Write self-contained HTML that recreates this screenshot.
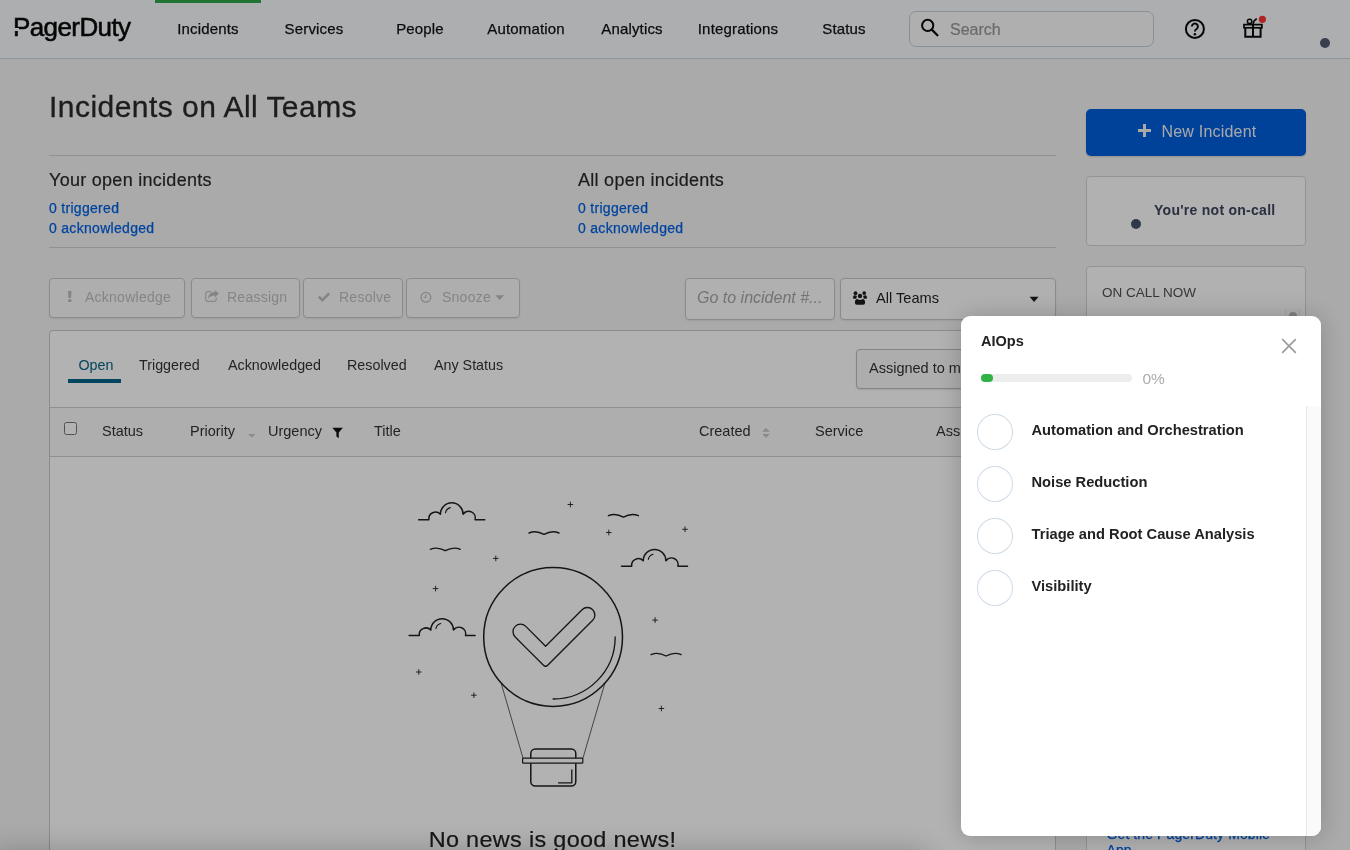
<!DOCTYPE html>
<html>
<head>
<meta charset="utf-8">
<title>Incidents - PagerDuty</title>
<style>
*{box-sizing:border-box;margin:0;padding:0}
html,body{width:1350px;height:850px;overflow:hidden;background:#f4f4f4;font-family:"Liberation Sans",sans-serif;color:#222}
.abs{position:absolute}
#page{position:absolute;left:0;top:0;width:1350px;height:850px;overflow:hidden;will-change:transform}
/* NAV */
#nav{position:absolute;left:0;top:0;width:1350px;height:59px;background:#f7f9fc;border-bottom:1px solid #cfd8e0}
#greenbar{position:absolute;left:155px;top:0;width:106px;height:3px;background:#2fa84a}
.navitem{position:absolute;top:19px;-webkit-text-stroke:0.25px #111;width:106px;text-align:center;font-size:15px;line-height:20px;letter-spacing:0.17px;color:#111}
#search{position:absolute;left:909px;top:11px;width:245px;height:36px;border:1px solid #c5ced8;border-radius:7px;background:#fbfbfb}
#search span{position:absolute;left:40px;top:8px;font-size:16px;line-height:20px;color:#999;-webkit-text-stroke:0.2px #999}
/* main */
h1{position:absolute;left:49px;top:88px;font-size:30px;line-height:38px;font-weight:400;letter-spacing:0.46px;color:#2a2a2a;-webkit-text-stroke:0.3px #2a2a2a;white-space:nowrap}
.hr{position:absolute;left:49px;width:1007px;height:1px;background:#d0d0d0}
.h3{position:absolute;font-size:18px;line-height:24px;letter-spacing:0.28px;color:#2a2a2a;-webkit-text-stroke:0.2px #2a2a2a;white-space:nowrap}
.lnk{position:absolute;font-size:14px;line-height:20px;letter-spacing:0.3px;color:#0061e4;-webkit-text-stroke:0.25px #0061e4;white-space:nowrap}
.btn{position:absolute;top:278px;height:40px;border:1px solid #c8c8c8;border-radius:4px;background:#fafafa;color:#bebebe;font-size:14px;line-height:38px;letter-spacing:0.25px;white-space:nowrap;box-shadow:0 1px 2px rgba(0,0,0,0.07)}
.btn span{position:absolute;top:-1px}

.btn i{position:absolute}
.inp{position:absolute;top:278px;height:42px;border:1px solid #c8c8c8;border-radius:4px;background:#fcfcfc;font-size:16px;line-height:38px;white-space:nowrap;box-shadow:0 1px 2px rgba(0,0,0,0.08)}
#panel{position:absolute;left:49px;top:330px;width:1007px;height:540px;background:#fff;border:1px solid #c9c9c9;border-radius:4px 4px 0 0}
.tab{position:absolute;top:24px;font-size:14.3px;line-height:20px;color:#333;white-space:nowrap}
#thead{position:absolute;left:0;top:76px;width:1005px;height:50px;background:#f9f9f9;border-top:1px solid #cfcfcf;border-bottom:1px solid #cfcfcf}
.th{position:absolute;top:13px;font-size:14.5px;line-height:20px;color:#333;white-space:nowrap}
.card{position:absolute;left:1086px;width:220px;border:1px solid #d5d5d5;border-radius:4px;background:#fefefe}
.item{position:absolute;left:70.5px;font-size:14.7px;line-height:20px;font-weight:700;color:#222;white-space:nowrap}
.circ{position:absolute;left:16.2px;width:35.8px;height:35.6px;margin-top:1.1px;border:1.4px solid #cedae6;border-radius:50%;background:#fff}
#overlay{position:absolute;left:0;top:0;width:1350px;height:850px;background:rgba(0,0,0,0.3)}
/* popup */
#popup{position:absolute;left:961px;top:316px;width:360px;height:520px;background:#fff;border-radius:9px;overflow:hidden;box-shadow:0 1px 26px rgba(0,0,0,0.215)}
</style>
</head>
<body>
<div id="page">
  <div id="nav">
    <div id="greenbar"></div>
    <div class="navitem" style="left:155px">Incidents</div>
    <div class="navitem" style="left:261px">Services</div>
    <div class="navitem" style="left:367px">People</div>
    <div class="navitem" style="left:473px">Automation</div>
    <div class="navitem" style="left:579px">Analytics</div>
    <div class="navitem" style="left:685px">Integrations</div>
    <div class="navitem" style="left:791px">Status</div>
    <div id="search"><span>Search</span></div>

    <div class="abs" id="logo" style="left:13px;top:11px;font-size:26px;line-height:32px;letter-spacing:-0.6px;color:#0a0a0a;-webkit-text-stroke:0.55px #0a0a0a;white-space:nowrap">PagerDuty</div>
    <div class="abs" style="left:13px;top:28.4px;width:6px;height:3px;background:#f7f9fc"></div>
    <svg class="abs" style="left:915px;top:14px" width="28" height="28" viewBox="915 14 28 28" fill="none" stroke="#0a0a0a"><circle cx="927.7" cy="25.4" r="5.6" stroke-width="2"/><path d="M931.8,29.6 L937.4,35.2" stroke-width="2.3" stroke-linecap="round"/></svg>
    <svg class="abs" style="left:1180px;top:14px" width="30" height="30" viewBox="1180 14 30 30" fill="none" stroke="#0a0a0a"><circle cx="1194.9" cy="28.9" r="9" stroke-width="2"/><path d="M1191.9,26.6 A3,3 0 1 1 1196.6,29 Q1194.9,30 1194.9,31.6" stroke-width="2"/><circle cx="1194.9" cy="34.2" r="1.3" fill="#0a0a0a" stroke="none"/></svg>
    <svg class="abs" style="left:1240px;top:14px" width="30" height="28" viewBox="1240 14 30 28" fill="none" stroke="#0a0a0a" stroke-width="2"><path d="M1245.3,28 V36.8 H1260.6 V28"/><rect x="1244" y="24.6" width="17.9" height="3.2" stroke-width="1.7"/><path d="M1253,24 V37"/><circle cx="1249.6" cy="21.4" r="2.2" stroke-width="1.5"/><path d="M1253,24.3 Q1253.6,20.2 1256.8,18.8" stroke-width="1.5"/><circle cx="1262.4" cy="19.3" r="3.6" fill="#fb3535" stroke="none"/></svg>
    <div class="abs" style="left:1320px;top:38px;width:10px;height:10px;border-radius:50%;background:#535b72"></div>
  </div>
  <h1>Incidents on All Teams</h1>
  <div class="hr" style="top:155px"></div>
  <div class="h3" style="left:49px;top:168px">Your open incidents</div>
  <div class="lnk" style="left:49px;top:198px">0 triggered</div>
  <div class="lnk" style="left:49px;top:218px">0 acknowledged</div>
  <div class="h3" style="left:578px;top:168px">All open incidents</div>
  <div class="lnk" style="left:578px;top:198px">0 triggered</div>
  <div class="lnk" style="left:578px;top:218px">0 acknowledged</div>
  <div class="hr" style="top:247px"></div>

  <!-- action buttons -->
  <div class="btn" style="left:49px;width:136px"><span style="left:35px">Acknowledge</span></div>
  <div class="btn" style="left:191px;width:109px"><span style="left:35px">Reassign</span></div>
  <div class="btn" style="left:303px;width:100px"><span style="left:35px">Resolve</span></div>
  <div class="btn" style="left:406px;width:114px"><span style="left:35px">Snooze</span></div>
  <div class="inp" style="left:685px;width:150px"><span style="position:absolute;left:11px;font-style:italic;color:#a6a6a6">Go to incident #...</span></div>
  <div class="inp" style="left:840px;width:216px"><span style="position:absolute;left:35px;font-size:14.6px;color:#222">All Teams</span></div>

  <!-- button icons -->
  <svg class="abs" style="left:60px;top:286px" width="460" height="24" viewBox="60 286 460 24">
    <g fill="#bdbdbd">
      <path d="M68,291 h3.5 l-0.5,7 h-2.5 z"/><rect x="68.1" y="299.3" width="3.3" height="2.6" rx="0.4"/>
      <path d="M318,297.6 l1.8,-1.8 l2.6,2.6 l5.8,-6 l1.8,1.8 l-7.6,7.7 z"/>
      <path d="M495.4,295.2 h8.6 l-4.3,4.8 z"/>
      <path d="M218.8,293.5 l-4,-3.5 v2.1 q-6.6,0 -6.6,6.8 q1.6,-3.6 6.6,-3.5 v2.1 z"/>
    </g>
    <g fill="none" stroke="#c6c6c6" stroke-width="1.3">
      <path d="M211.6,291.7 h-3.6 a2.3,2.3 0 0 0 -2.3,2.3 v5.1 a2.3,2.3 0 0 0 2.3,2.3 h6 a2.3,2.3 0 0 0 2.3,-2.3 v-1.6"/>
      <circle cx="425.9" cy="297.3" r="4.9" stroke="#bdbdbd" stroke-width="1.2"/>
      <path d="M425.9,294.3 v3.2 h-2.3" stroke="#bdbdbd" stroke-width="1.1"/>
    </g>
  </svg>
  <!-- team icon + caret -->
  <svg class="abs" style="left:850px;top:288px" width="192" height="20" viewBox="850 288 192 20" fill="#1c1c1c">
    <circle cx="855.5" cy="293.2" r="1.9"/><circle cx="864.2" cy="293.1" r="1.9"/><circle cx="860" cy="296" r="2.2"/>
    <path d="M853,297.5 q0,-2.3 1.8,-2.3 q1.6,0 2.2,1 q-0.9,1.2 -0.6,2.6 h-2.2 q-1.2,0 -1.2,-1.3 z"/>
    <path d="M867,297.5 q0,-2.3 -1.8,-2.3 q-1.6,0 -2.2,1 q0.9,1.2 0.6,2.6 h2.2 q1.2,0 1.2,-1.3 z"/>
    <path d="M854.9,302.7 q0,-3.6 2.6,-3.6 q1.2,0.9 2.5,0.9 q1.3,0 2.5,-0.9 q2.6,0 2.6,3.6 q0,2 -2,2 h-6.2 q-2,0 -2,-2 z"/>
    <path d="M1029.6,296.7 h9 l-4.5,5.2 z"/>
  </svg>
  <!-- table panel -->
  <div id="panel">
    <div class="tab" style="left:28.5px;color:#076488">Open</div>
    <div class="abs" style="left:18px;top:48px;width:53px;height:4px;background:#076488"></div>
    <div class="tab" style="left:89px">Triggered</div>
    <div class="tab" style="left:178px">Acknowledged</div>
    <div class="tab" style="left:297px">Resolved</div>
    <div class="tab" style="left:384px">Any Status</div>
    <div class="abs" style="left:806px;top:18px;width:180px;height:40px;border:1px solid #bdbdbd;border-radius:4px;background:#f8f8f8;box-shadow:0 1px 2px rgba(0,0,0,0.1)"><span style="position:absolute;left:12px;top:8px;font-size:14.5px;line-height:20px;color:#333;white-space:nowrap">Assigned to me</span></div>
    <div id="thead">
      <div class="abs" style="left:14px;top:14px;width:13px;height:13px;border:1px solid #767676;border-radius:2.5px;background:#fff"></div>
      <div class="th" style="left:52px">Status</div>
      <div class="th" style="left:140px">Priority</div>
      <div class="th" style="left:218px">Urgency</div>
      <div class="th" style="left:324px">Title</div>
      <div class="th" style="left:649px">Created</div>
      <div class="th" style="left:765px">Service</div>
      <div class="th" style="left:886px">Assigned To</div>
    </div>
    <div class="abs" style="left:0;top:495px;width:1005px;text-align:center;font-size:22px;line-height:28px;letter-spacing:0.3px;transform:scaleX(1.065);-webkit-text-stroke:0.2px #222;color:#222">No news is good news!</div>
  </div>
  <svg class="abs" style="left:400px;top:490px" width="300" height="310" viewBox="400 490 300 310" fill="none" stroke="#1f1f1f" stroke-width="1.5" stroke-linecap="round" stroke-linejoin="round"><g transform="translate(418.1,502.0)"><path d="M0.6,17.7 H10.8 A6.7,6.7 0 0 1 22.3,12.2 A11.3,11.3 0 0 1 45,12.2 A6.7,6.7 0 0 1 57,17.7 H66.6"/><path d="M27.4,10.8 A6.6,6.6 0 0 1 32.2,5.6" stroke-width="1.1"/></g><g transform="translate(620.9,548.6)"><path d="M0.6,17.7 H10.8 A6.7,6.7 0 0 1 22.3,12.2 A11.3,11.3 0 0 1 45,12.2 A6.7,6.7 0 0 1 57,17.7 H66.6"/><path d="M27.4,10.8 A6.6,6.6 0 0 1 32.2,5.6" stroke-width="1.1"/></g><g transform="translate(408.5,617.9)"><path d="M0.6,17.7 H10.8 A6.7,6.7 0 0 1 22.3,12.2 A11.3,11.3 0 0 1 45,12.2 A6.7,6.7 0 0 1 57,17.7 H66.6"/><path d="M27.4,10.8 A6.6,6.6 0 0 1 32.2,5.6" stroke-width="1.1"/></g><path transform="translate(430.3,548.3)" d="M0,1 Q7,-2 15,2.4 Q23,-2 30,1" stroke-width="1.4"/><path transform="translate(529,532)" d="M0,1 Q7,-2 15,2.4 Q23,-2 30,1" stroke-width="1.4"/><path transform="translate(608.4,514.7)" d="M0,1 Q7,-2 15,2.4 Q23,-2 30,1" stroke-width="1.4"/><path transform="translate(651.1,653.6)" d="M0,1 Q7,-2 15,2.4 Q23,-2 30,1" stroke-width="1.4"/><path d="M568.0,504.5 H572.8 M570.4,502.1 V506.9" stroke-width="0.9"/><path d="M606.4,532.5 H611.2 M608.8,530.1 V534.9" stroke-width="0.9"/><path d="M682.6,529.3 H687.4 M685,526.9 V531.7" stroke-width="0.9"/><path d="M493.4,558.4 H498.2 M495.8,556.0 V560.8" stroke-width="0.9"/><path d="M433.2,588.6 H438.0 M435.6,586.2 V591.0" stroke-width="0.9"/><path d="M652.7,620.1 H657.5 M655.1,617.7 V622.5" stroke-width="0.9"/><path d="M416.4,672 H421.2 M418.8,669.6 V674.4" stroke-width="0.9"/><path d="M471.5,695.2 H476.3 M473.9,692.8 V697.6" stroke-width="0.9"/><path d="M659.0,708.5 H663.8 M661.4,706.1 V710.9" stroke-width="0.9"/><circle cx="553.1" cy="637" r="69.4" stroke-width="1.5"/><path d="M615.2,637 A62,62 0 0 1 553.1,699" stroke-width="1.3"/><g transform="translate(545.6,656.8) rotate(45)"><path stroke-width="1.3" d="M-35.5,-7.5 L-7.5,-7.5 L-7.5,-59.1 A7.5,7.5 0 0 1 7.5,-59.1 L7.5,4.5 A3,3 0 0 1 4.5,7.5 L-35.5,7.5 A7.5,7.5 0 0 1 -35.5,-7.5 Z"/></g><path d="M501.2,683.5 L523,758 M604.8,683.5 L583,758" stroke-width="0.7"/><rect x="530.8" y="749" width="45" height="37" rx="4.5" stroke-width="1.5"/><rect x="522.6" y="758.2" width="60.2" height="5" rx="0.8" fill="#fff" stroke-width="1.2"/><path d="M571.8,770 V782.8 H558.5" stroke-width="1.3"/></svg>
  <!-- header sort / filter icons -->
  <svg class="abs" style="left:245px;top:424px" width="530" height="18" viewBox="245 424 530 18">
    <path d="M248,434 h7.4 l-3.7,3.8 z" fill="#c9c9c9"/>
    <path d="M332.3,427.8 h10.6 l-4.1,4.6 v5.9 l-2.4,-1.8 v-4.1 z" fill="#111"/>
    <path d="M762.2,431.7 h7.6 l-3.8,-3.7 z M762.2,434 h7.6 l-3.8,3.7 z" fill="#c4c4c4"/>
  </svg>
  <!-- right column -->
  <div class="abs" style="left:1086px;top:109px;width:220px;height:47px;background:#005ddd;border-radius:5px;box-shadow:0 1px 2px rgba(0,0,0,0.15)"><div class="abs" style="left:51.8px;top:19.8px;width:13px;height:3.4px;background:#f2f2f2"></div><div class="abs" style="left:56.6px;top:15px;width:3.4px;height:13px;background:#f2f2f2"></div><span style="position:absolute;left:75.5px;top:13px;font-size:16px;line-height:20px;letter-spacing:0.2px;color:#f2f2f2;white-space:nowrap">New Incident</span></div>
  <div class="card" style="top:176px;height:70px"><span style="position:absolute;left:67px;top:24px;font-size:14px;line-height:18px;font-weight:700;letter-spacing:0.27px;color:#3b455b;white-space:nowrap">You're not on-call</span><div class="abs" style="left:44px;top:42px;width:10px;height:10px;border-radius:50%;background:#465068"></div></div>
  <div class="card" style="top:266px;height:600px"><span style="position:absolute;left:15px;top:16px;font-size:13.5px;line-height:20px;color:#505050;white-space:nowrap">ON CALL NOW</span><div class="abs" style="left:198px;top:42px;width:15px;height:10px;background:#fbfbfb;border-left:1px solid #ececec;border-right:1px solid #ececec"></div><div class="abs" style="left:201.8px;top:45px;width:8.2px;height:8.2px;border-radius:4.1px;background:#b9b9b9"></div>
    <span style="position:absolute;left:19.5px;top:559px;font-size:14px;line-height:16px;letter-spacing:0.1px;color:#0061e4;-webkit-text-stroke:0.25px #0061e4;white-space:nowrap">Get the PagerDuty Mobile<br>App</span></div>
  <div id="overlay"></div>
  <div class="abs" style="left:-12px;top:853px;width:941px;height:40px;box-shadow:0 0 32px rgba(0,0,0,0.27)"></div>
  <div id="popup">
    <div class="abs" style="left:20px;top:15px;font-size:14.5px;line-height:20px;font-weight:700;color:#222">AIOps</div>
    <svg class="abs" style="left:320px;top:22px" width="16" height="16" viewBox="0 0 16 16"><path d="M1.2 1.2L14.8 14.8M14.8 1.2L1.2 14.8" stroke="#9c9c9c" stroke-width="1.7" fill="none"/></svg>
    <div class="abs" style="left:20px;top:58px;width:151px;height:8px;border-radius:4px;background:#ededed"></div>
    <div class="abs" style="left:20px;top:58px;width:12px;height:8px;border-radius:4px;background:#2fb344"></div>
    <div class="abs" style="left:181.5px;top:52.5px;font-size:15.5px;line-height:20px;color:#ababab">0%</div>
    <div class="abs" style="left:345px;top:90px;width:15px;height:430px;background:#fafafa;border-left:1px solid #e8e8e8"></div>
    <div class="circ" style="top:97px"></div><div class="item" style="top:104px">Automation and Orchestration</div>
    <div class="circ" style="top:149px"></div><div class="item" style="top:156px">Noise Reduction</div>
    <div class="circ" style="top:201px"></div><div class="item" style="top:208px">Triage and Root Cause Analysis</div>
    <div class="circ" style="top:253px"></div><div class="item" style="top:260px">Visibility</div>
  </div>
</div>
</body>
</html>
